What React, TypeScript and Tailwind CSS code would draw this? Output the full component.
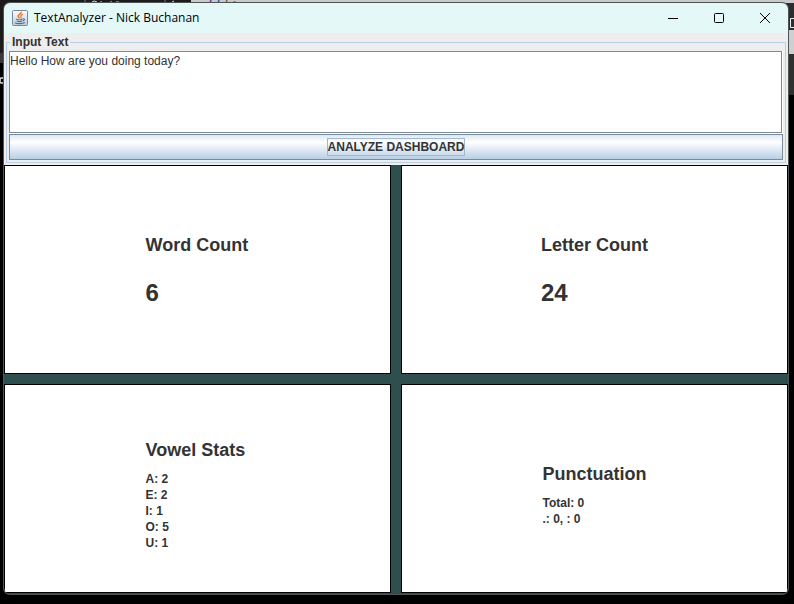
import { useState } from "react";
import type { ReactNode } from "react";

function JavaIcon() {
  return (
    <svg width="16" height="16" viewBox="0 0 16 16" aria-hidden="true">
      <defs>
        <linearGradient id="javaTile" x1="0" y1="0" x2="0" y2="1">
          <stop offset="0" stopColor="#fbfcfd" />
          <stop offset="1" stopColor="#bfcbd8" />
        </linearGradient>
      </defs>
      <rect x="0.5" y="0.5" width="15" height="15" rx="1" fill="url(#javaTile)" stroke="#74899f" />
      <path d="M9.300 1.800c.6 1.700-3.400 2.700-3.200 4.400.1 1 1.300 1.200 1.100 2.300" fill="none" stroke="#e8731f" strokeWidth="1.500" />
      <path d="M11 4.300c-1.800.7-2.600 1.300-2 2.300.4.600.2 1.200-.3 1.700" fill="none" stroke="#e8731f" strokeWidth="1.200" />
      <path d="M4 9.200c1.500.8 4.900.8 6.400 0M4.800 11c1.400.6 3.900.6 5.200 0M10.800 8.800c2.200-.5 2.200 1.700-.3 2.200" fill="none" stroke="#4a7396" strokeWidth="1.100" />
      <path d="M3 12.700c2 1.300 7.800 1.300 9.800-.1" fill="none" stroke="#4a7396" strokeWidth="1.200" />
    </svg>
  );
}

/* Slices of the desktop windows that show behind the application. */
function Backdrop() {
  return (
    <div className="absolute inset-0 bg-black" aria-hidden="true">
      <div className="absolute left-0 top-0 h-[53px] w-5 bg-[#1c1a1b]" />
      <div className="absolute left-0 top-[53px] h-[10px] w-1 bg-[#39383a]" />
      <div className="absolute right-0 top-0 h-[30px] w-5 bg-[#2d2d2d]" />
      <div className="absolute right-0 top-[30px] h-6 w-2 bg-[#cfcfcf]" />
      <div className="absolute right-0 top-[54px] h-[41px] w-2 bg-[#303030]" />
      <div className="absolute inset-x-0 top-0 flex h-[3px]">
        <div className="w-[191px] bg-[#1c1a1b]" />
        <div className="grow bg-[#c9c9c9]" />
      </div>
      <svg className="absolute left-0 top-0" width="250" height="6">
        <path d="M85 0v3M165 0v3" stroke="#777" />
        <path d="M92 2q2-2 5 0M101 1v2M111 1v2M116 2h3M172 2l2-1" stroke="#ddd" fill="none" />
        <path d="M211 0l-1 3" stroke="#7b2aa8" strokeWidth="1.500" />
        <path d="M219 0l-1 3" stroke="#2558b5" strokeWidth="1.500" />
        <path d="M227 0l-1 3" stroke="#8a5a3c" strokeWidth="1.500" />
        <path d="M233 2h3" stroke="#555" />
      </svg>
      <svg className="absolute left-0 top-[76px]" width="4" height="9">
        <path d="M3 2H1Q0 2 0 4.500T1 7h2" stroke="#ddd" fill="none" strokeWidth="1.500" />
      </svg>
      <svg className="absolute right-0 top-[18px]" width="4" height="10">
        <path d="M4 .5H.5v9H4" stroke="#eee" fill="none" />
      </svg>
    </div>
  );
}

function TitleBar() {
  return (
    <header className="flex h-[30px] items-center bg-[#e4f8f8] pb-px pl-2 text-black">
      <JavaIcon />
      <h1 className="ml-[6px] grow font-['Open_Sans','Noto_Sans',sans-serif] text-[12px] leading-4">
        TextAnalyzer - Nick Buchanan
      </h1>
      <button type="button" aria-label="Minimize" className="flex h-full w-[46px] items-center justify-center">
        <svg width="10" height="10"><path d="M0 5.500h10" stroke="#000" /></svg>
      </button>
      <button type="button" aria-label="Maximize" className="flex h-full w-[46px] items-center justify-center">
        <svg width="10" height="10"><rect x=".5" y=".5" width="9" height="9" rx="1" fill="none" stroke="#000" /></svg>
      </button>
      <button type="button" aria-label="Close" className="flex h-full w-[46px] items-center justify-center">
        <svg width="10" height="10"><path d="M0 0l10 10M10 0L0 10" stroke="#000" /></svg>
      </button>
    </header>
  );
}

function Card({ title, value, children }: { title: string; value?: number; children?: ReactNode }) {
  return (
    <section className="flex items-center justify-center border border-black bg-white">
      <div className={value === undefined ? "min-w-[104px] pt-[13px]" : "min-w-[104px] pt-[3px]"}>
        <h2 className="text-[18px] font-bold leading-[21px]">{title}</h2>
        {value !== undefined && <p className="mt-[23px] text-[24px] font-bold leading-7">{value}</p>}
        {children && <div className="mt-[10px] text-[12px] font-bold leading-4">{children}</div>}
      </div>
    </section>
  );
}

const vowels = [["A", 2], ["E", 2], ["I", 1], ["O", 5], ["U", 1]];

export default function App() {
  const [text, setText] = useState("Hello How are you doing today?");
  return (
    <div className="relative h-screen overflow-hidden pb-[10px] pl-1 pr-[6px] pt-[3px] font-['Liberation_Sans',Arial,sans-serif] text-[#333]">
      <Backdrop />
      <main className="relative flex h-full flex-col overflow-hidden rounded-[6px] bg-[#2f4f4f] shadow-[0_0_0_1px_#4d5556]">
        <TitleBar />
        <div className="bg-[#eee] px-[2px] pb-[2px]">
          <fieldset className="border border-[#b8cfe5] px-[2px] pb-[2px]">
            <legend className="ml-px px-[2px] text-[12px] font-bold leading-[18px]">
              <label htmlFor="source">Input Text</label>
            </legend>
            <div className="bg-white pb-px pr-px">
              <textarea
                id="source"
                value={text}
                onChange={(event) => setText(event.target.value)}
                className="block h-[82px] w-full resize-none border border-[#7a8a99] bg-white text-[12px] leading-[18px] outline-none"
              />
            </div>
            <button
              type="button"
              className="flex h-[26px] w-full items-center justify-center border border-[#7a8a99] bg-linear-to-b from-[#dde8f3] via-white via-30% to-[#b8cfe5] text-[12px] font-bold"
            >
              <span className="border border-[#a3b8cc] leading-4">ANALYZE DASHBOARD</span>
            </button>
          </fieldset>
        </div>
        <div className="grid grow grid-cols-2 grid-rows-2 gap-[10px] pb-px">
          <Card title="Word Count" value={6} />
          <Card title="Letter Count" value={24} />
          <Card title="Vowel Stats">
            {vowels.map(([vowel, count]) => (
              <p key={vowel}>{vowel}: {count}</p>
            ))}
          </Card>
          <Card title="Punctuation">
            <p>Total: 0</p>
            <p>.: 0, : 0</p>
          </Card>
        </div>
      </main>
    </div>
  );
}
